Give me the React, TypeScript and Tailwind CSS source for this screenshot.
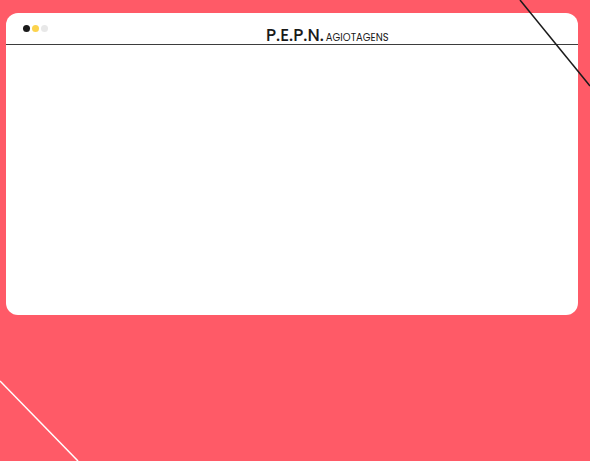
export default function App() {
  return (
    <div className="relative w-[590px] h-[461px] overflow-hidden bg-[#ff5a67] pt-[13px] pl-[6px] font-['Poppins','Open_Sans',sans-serif]">
      {/* browser window */}
      <div className="w-[572px] h-[302px] bg-white rounded-[12px] overflow-hidden">
        <div className="flex h-[32px] border-b border-[#3d3d3d]">
          <div className="flex gap-[2px] pt-[12px] pl-[17px]">
            <span className="w-[7px] h-[7px] rounded-full bg-[#1a1a1a]" />
            <span className="w-[7px] h-[7px] rounded-full bg-[#fcd34d]" />
            <span className="w-[7px] h-[7px] rounded-full bg-[#e8e8e8]" />
          </div>
          <div className="ml-[218px] pt-[14px] flex items-baseline text-[#1a1a1a] leading-none">
            <span className="text-[17px] font-medium">P.E.P.N.</span>
            <span className="ml-[2px] text-[10px]">AGIOTAGENS</span>
          </div>
        </div>
      </div>

      {/* decorative lines */}
      <svg className="absolute inset-0 pointer-events-none" width="590" height="461">
        <line x1="520" y1="0" x2="590" y2="86" stroke="#1a1a1a" strokeWidth="1.5" />
        <line x1="0" y1="381" x2="78" y2="461" stroke="#ffffff" strokeWidth="1.5" />
      </svg>
    </div>
  );
}
